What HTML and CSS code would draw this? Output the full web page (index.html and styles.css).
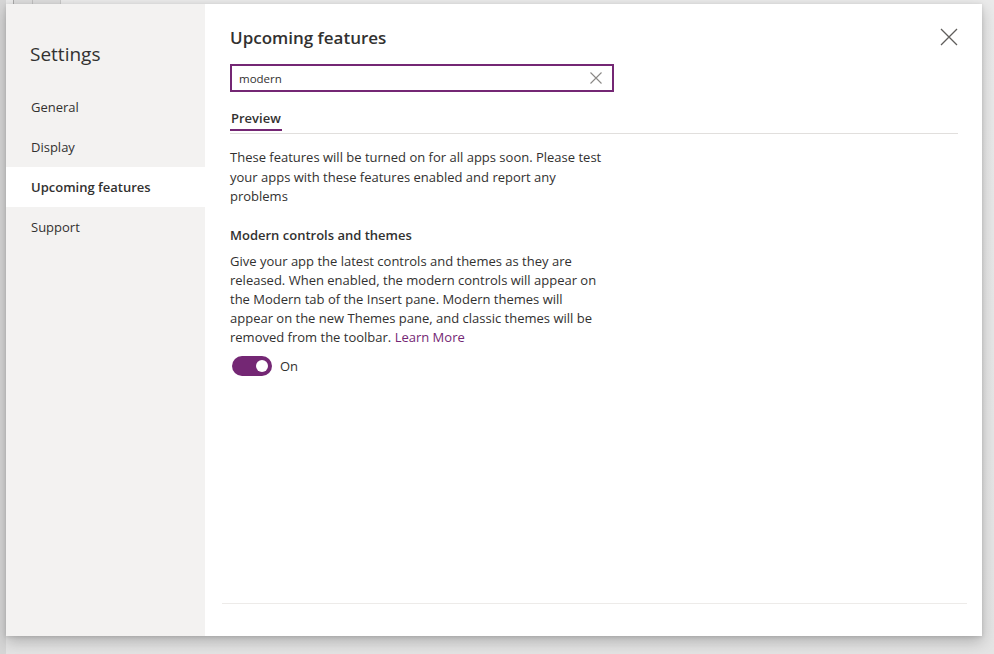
FILE: index.html
```html
<!DOCTYPE html>
<html>
<head>
<meta charset="utf-8">
<link rel="stylesheet" href="styles.css">
</head>
<body>
<div class="backdrop">
  <div class="bg-strip"></div>
  <div class="bg-tab"></div>
  <div class="dialog">
    <nav class="nav">
      <h1 class="nav-title">Settings</h1>
      <ul class="nav-list">
        <li class="nav-item">General</li>
        <li class="nav-item">Display</li>
        <li class="nav-item active">Upcoming features</li>
        <li class="nav-item">Support</li>
      </ul>
    </nav>
    <main class="main">
      <div class="main-head">
        <h2 class="main-title">Upcoming features</h2>
        <button class="close" aria-label="Close">
          <svg width="18" height="18" viewBox="0 0 18 18"><path d="M1 1L17 17M17 1L1 17" stroke="#605e5c" stroke-width="1.3" fill="none"/></svg>
        </button>
      </div>
      <div class="search">
        <span class="search-text">modern</span>
        <svg class="search-clear" width="12" height="12" viewBox="0 0 12 12"><path d="M0.5 0.5L11.5 11.5M11.5 0.5L0.5 11.5" stroke="#8a8886" stroke-width="1.1" fill="none"/></svg>
      </div>
      <div class="tabs">
        <span class="tab active">Preview</span>
      </div>
      <div class="content">
        <p class="intro">These features will be turned on for all apps soon. Please test your apps with these features enabled and report any problems</p>
        <h3 class="feature-title">Modern controls and themes</h3>
        <p class="feature-desc">Give your app the latest controls and themes as they are released. When enabled, the modern controls will appear on the Modern tab of the Insert pane. Modern themes will appear on the new Themes pane, and classic themes will be removed from the toolbar. <a class="link" href="#">Learn More</a></p>
        <div class="toggle-row">
          <span class="toggle"><span class="knob"></span></span>
          <span class="toggle-label">On</span>
        </div>
      </div>
      <div class="spacer"></div>
      <div class="footer"></div>
    </main>
  </div>
</div>
</body>
</html>
```
FILE: styles.css
```css
* { box-sizing: border-box; }
html, body { margin: 0; padding: 0; }
body {
  width: 994px;
  height: 654px;
  overflow: hidden;
  background: #e6e6e6;
  font-family: "Open Sans", "Noto Sans", sans-serif;
  color: #323130;
}
.backdrop {
  position: relative;
  width: 994px;
  height: 654px;
  background: linear-gradient(#eaeaea, #e4e4e4);
}
.bg-strip {
  position: absolute;
  left: 0; top: 0;
  width: 6px; height: 654px;
  background: #d6d6d6;
}
.bg-tab {
  position: absolute;
  left: 13px; top: 0;
  width: 48px; height: 4px;
  background: #dcdcdc;
  border-left: 1px solid #a8a8a8;
  border-right: 1px solid #c8c8c8;
}
.bg-tab::after {
  content: "";
  position: absolute;
  left: 18px; top: 0;
  width: 1px; height: 4px;
  background: #c0c0c0;
}
.dialog {
  position: absolute;
  left: 6px; top: 4px;
  width: 976px; height: 632px;
  display: flex;
  background: #fff;
  box-shadow: 0 6px 14px rgba(0,0,0,0.22), 0 1px 4px rgba(0,0,0,0.12);
}
.nav {
  width: 199px;
  flex: none;
  background: #f3f2f1;
}
.nav-title {
  margin: 36px 0 0 24px;
  font-size: 19px;
  font-weight: 400;
  line-height: 28px;
  color: #323130;
}
.nav-list {
  list-style: none;
  margin: 19px 0 0;
  padding: 0;
}
.nav-item {
  height: 40px;
  line-height: 40px;
  padding-left: 25px;
  font-size: 13px;
  color: #323130;
}
.nav-item.active {
  background: #fff;
  font-weight: 600;
}
.main {
  flex: 1;
  display: flex;
  flex-direction: column;
  padding: 0 24px 0 17px;
}
.main-head {
  display: flex;
  align-items: flex-start;
  justify-content: space-between;
  padding: 20px 0 0 8px;
}
.main-title {
  margin: 0;
  font-size: 17px;
  font-weight: 600;
  line-height: 28px;
  color: #323130;
}
.close {
  border: 0;
  background: none;
  padding: 0;
  margin: 4px 0 0 0;
  width: 18px;
  height: 18px;
  cursor: pointer;
}
.close svg { display: block; }
.search {
  margin: 12px 0 0 8px;
  width: 384px;
  height: 28px;
  border: 2px solid #742774;
  display: flex;
  align-items: center;
  justify-content: space-between;
  padding: 0 10px 0 7px;
}
.search-text {
  font-size: 11.5px;
  color: #323130;
}
.search-clear { display: block; }
.tabs {
  margin: 13px 0 0 8px;
  border-bottom: 1px solid #e1dfdd;
  display: flex;
}
.tab {
  font-size: 13px;
  font-weight: 600;
  line-height: 20px;
  padding: 3px 1px 1px 1px;
  border-bottom: 2px solid #742774;
  margin-bottom: 2px;
}
.content {
  padding-left: 8px;
  width: 382px;
}
.intro {
  margin: 14px 0 0;
  font-size: 13px;
  line-height: 19.5px;
  color: #323130;
}
.feature-title {
  margin: 18px 0 0;
  font-size: 13px;
  font-weight: 600;
  line-height: 20px;
}
.feature-desc {
  margin: 7px 0 0;
  font-size: 13px;
  line-height: 19px;
}
.link {
  color: #742774;
  text-decoration: none;
}
.toggle-row {
  display: flex;
  align-items: center;
  margin-top: 9px;
  padding-left: 2px;
}
.toggle {
  width: 40px;
  height: 20px;
  border-radius: 10px;
  background: #742774;
  display: flex;
  align-items: center;
  justify-content: flex-end;
  padding-right: 4px;
}
.knob {
  width: 12px;
  height: 12px;
  border-radius: 50%;
  background: #fff;
}
.toggle-label {
  margin-left: 8px;
  font-size: 13px;
}
.spacer { flex: 1; }
.footer {
  height: 1px;
  background: #edebe9;
  margin: 0 -9px 32px 0;
}
```
